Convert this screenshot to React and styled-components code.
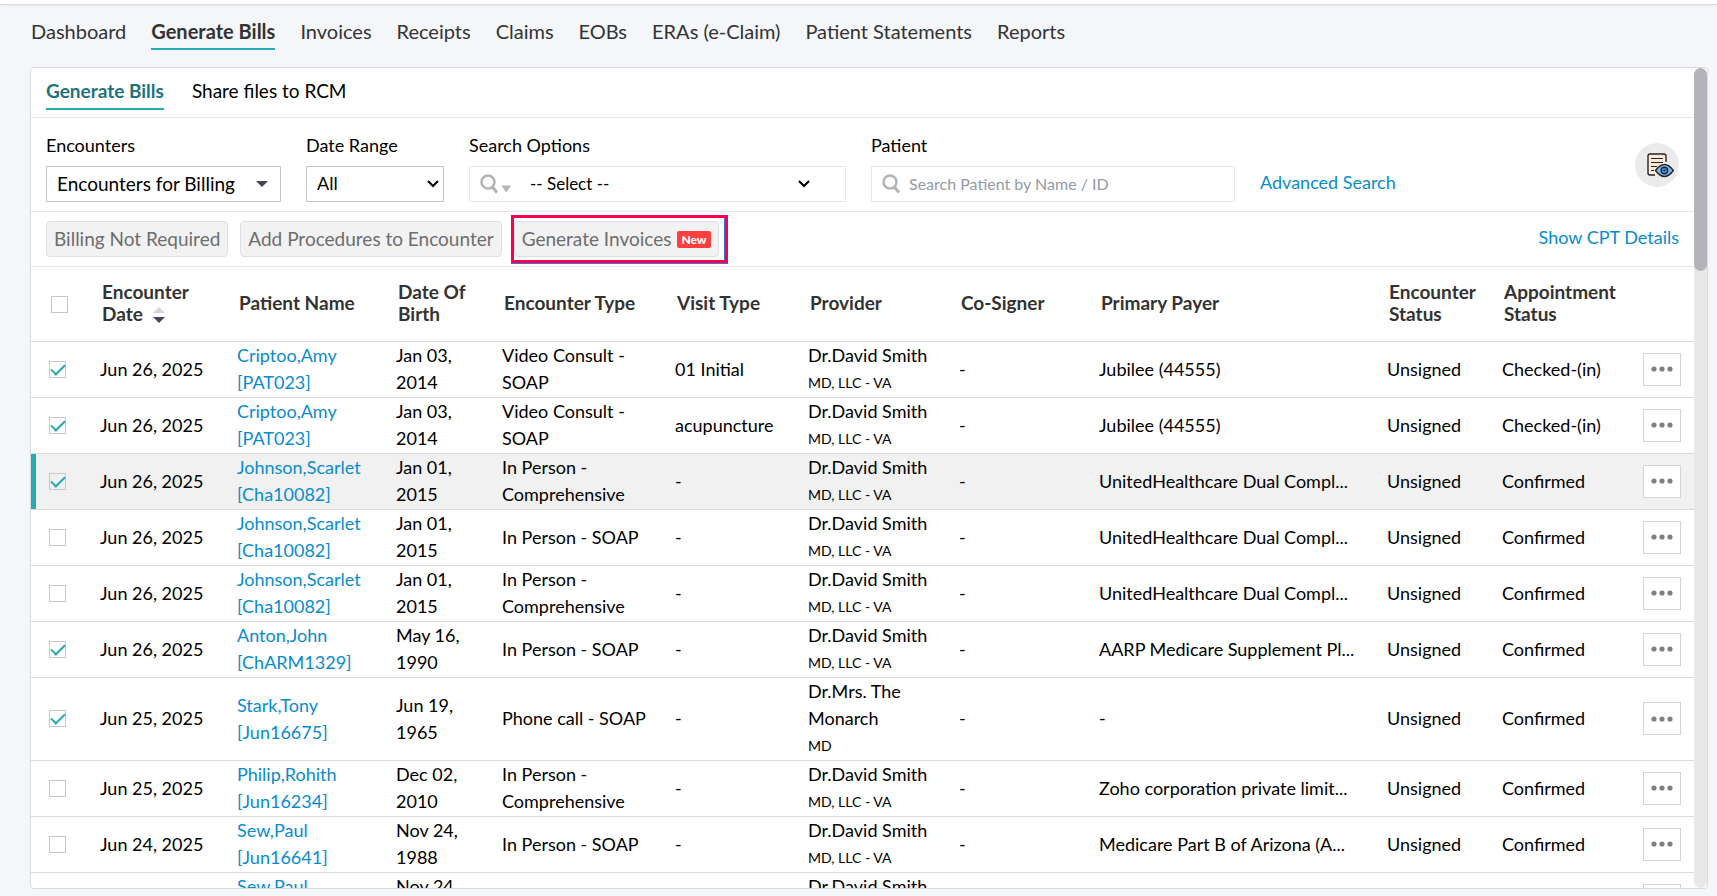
import React from "react";
import styled, { createGlobalStyle, css } from "styled-components";

const GlobalStyle = createGlobalStyle`
  * {
    box-sizing: border-box;
  }
  body {
    margin: 0;
    background-color: #f4f6fa;
    color: #000;
    font-family: Lato, "Open Sans", sans-serif;
    font-size: 18px;
  }
  button,
  input,
  select {
    font-family: inherit;
  }
`;

//Page Layout//
const Page = styled.div`
  height: 100vh;
  display: flex;
  flex-direction: column;
  padding: 0 9px 7px 30px;
`;
const TopStrip = styled.div`
  height: 5px;
  flex: none;
  margin: 0 -9px 0 -30px;
  background-color: #fff;
  border-bottom: 1px solid #dcdee2;
  box-shadow: 0 1px 2px rgba(0, 0, 0, 0.06);
`;
const Panel = styled.main`
  flex: 1;
  min-height: 0;
  display: flex;
  background-color: #fff;
  border: 1px solid #d9dbdd;
  border-radius: 4px;
  overflow: hidden;
`;
const PanelBody = styled.div`
  flex: 1;
  min-width: 0;
  overflow: hidden;
`;
const ScrollTrack = styled.div`
  width: 13px;
  flex: none;
  background-color: #e8e8e8;
  border-radius: 7px;
`;
const ScrollThumb = styled.div`
  height: 203px;
  background-color: #b6b2bb;
  border-radius: 7px;
`;

//Navigation//
const MainNav = styled.nav`
  flex: none;
  display: flex;
  align-items: flex-start;
  gap: 25px;
  height: 62px;
  padding: 13px 0 0 1px;
`;
const NavLink = styled.a`
  padding-bottom: 4px;
  color: #333;
  font-size: 20px;
  line-height: 26px;
  white-space: nowrap;
  text-decoration: none;
  ${({ $active }) =>
    $active &&
    css`
      font-weight: 700;
      border-bottom: 2px solid #25abb1;
    `}
`;
const SubNav = styled.nav`
  display: flex;
  align-items: flex-start;
  gap: 28px;
  height: 50px;
  padding: 10px 15px 0;
  border-bottom: 1px solid #e5e6e7;
`;
const SubLink = styled.a`
  padding-bottom: 4px;
  color: #000;
  font-size: 19px;
  line-height: 26px;
  text-decoration: none;
  ${({ $active }) =>
    $active &&
    css`
      color: #1d737b;
      font-weight: 700;
      border-bottom: 2px solid #25abb1;
    `}
`;

//Filters//
const Filters = styled.section`
  display: flex;
  align-items: flex-start;
  gap: 25px;
  height: 94px;
  padding: 15px 15px 0;
  border-bottom: 1px solid #e5e6e7;
`;
const Field = styled.div`
  width: ${({ $width }) => $width}px;
  flex: 0 1 auto;
`;
const Label = styled.label`
  display: block;
  margin-bottom: 9px;
  line-height: 24px;
`;
const Box = styled.div`
  position: relative;
  display: flex;
  align-items: center;
  height: 36px;
  border: 1px solid ${({ $soft }) => ($soft ? "#e8e8e8" : "#c4c4c4")};
`;
const Select = styled.select`
  appearance: none;
  width: 100%;
  height: 34px;
  padding: 0 30px 2px ${({ $indent }) => $indent || 10}px;
  border: 0;
  background: transparent;
  color: #000;
  font-size: ${({ $size }) => $size || 18}px;
`;
const BoxIcon = styled.svg`
  position: absolute;
  top: 50%;
  ${({ $left }) => ($left ? `left: ${$left}px;` : "")}
  ${({ $right }) => ($right ? `right: ${$right}px;` : "")}
  transform: translateY(-50%);
  pointer-events: none;
`;
const SearchInput = styled.input`
  width: 100%;
  height: 34px;
  padding: 0 8px 2px 37px;
  border: 0;
  background: transparent;
  font-size: 16px;
  &::placeholder {
    color: #949aa6;
    opacity: 1;
  }
`;
const TextLink = styled.a`
  color: #0a8bcf;
  text-decoration: none;
`;
const AdvancedLink = styled(TextLink)`
  margin-top: 36px;
  line-height: 26px;
  white-space: nowrap;
`;
const PreviewButton = styled.button`
  width: 44px;
  height: 44px;
  flex: none;
  display: grid;
  place-items: center;
  margin: 10px 0 0 auto;
  padding: 0 0 0 6px;
  border: 0;
  border-radius: 50%;
  background-color: #ebebeb;
`;

//Actions//
const Actions = styled.section`
  display: flex;
  align-items: center;
  gap: 12px;
  height: 55px;
  padding: 0 15px;
  border-bottom: 1px solid #e5e6e7;
`;
const ActionButton = styled.button`
  display: flex;
  align-items: center;
  gap: 6px;
  height: 36px;
  padding: 0 7px 2px;
  border: 1px solid #dfe0e3;
  border-radius: 4px;
  background-color: #f2f2f2;
  color: #6d6d70;
  font-size: 19px;
  white-space: nowrap;
`;
const Highlight = styled.div`
  margin-left: -3px;
  padding: 3px 6px 3px 0;
  border: 3px solid #f9004f;
  box-shadow: 0 1px 0 #3f6fd8, inset -1px 0 0 #3f6fd8;
`;
const NewBadge = styled.span`
  margin-top: 3px;
  padding: 0 4px;
  border-radius: 2px;
  background-color: #ff3e3e;
  color: #fff;
  font-size: 12px;
  font-weight: 900;
  line-height: 17px;
`;
const DetailsLink = styled(TextLink)`
  margin-left: auto;
  padding-bottom: 4px;
`;

//Encounter Table//
const Table = styled.table`
  width: 100%;
  table-layout: fixed;
  border-collapse: separate;
  border-spacing: 0;
`;
const Col = styled.col`
  width: ${({ $width }) => ($width ? `${$width}px` : "auto")};
`;
const Th = styled.th`
  height: 75px;
  padding: 0 10px 2px;
  border-bottom: 1px solid #d9dbdd;
  color: #333;
  font-size: 19px;
  font-weight: 700;
  line-height: 22px;
  text-align: left;
  &:first-child {
    padding: 0 0 0 20px;
  }
`;
const Td = styled.td`
  padding: 0 8px 1px;
  border-bottom: 1px solid #d9dbdd;
  line-height: 27px;
  &:first-child {
    padding-left: 18px;
  }
`;
const Row = styled.tr`
  ${({ $current }) =>
    $current &&
    css`
      background-color: #f1f1f1;
      ${Td}:first-child {
        box-shadow: inset 5px 0 0 #25abb1;
      }
    `}
`;
const PayerTd = styled(Td)`
  overflow: hidden;
  text-overflow: ellipsis;
  white-space: nowrap;
`;
const Suffix = styled.div`
  font-size: 14px;
`;
const CheckBox = styled.input`
  appearance: none;
  display: block;
  width: 17px;
  height: 17px;
  margin: 0;
  border: 1px solid #c8c8c8;
  background-color: transparent;
  &:checked::after {
    content: "";
    display: block;
    width: 6px;
    height: 12px;
    margin: -1px auto 0;
    border: solid #25abb1;
    border-width: 0 2px 2px 0;
    transform: rotate(45deg);
  }
`;
const MoreButton = styled.button`
  display: grid;
  place-items: center;
  width: 38px;
  height: 33px;
  padding: 0;
  border: 1px solid #d4d4d4;
  background-color: #fff;
`;

//Icons//
const CaretDown = (props) => (
  <BoxIcon width="12" height="6" viewBox="0 0 12 6" {...props}>
    <path d="M0 0h12L6 6z" fill="#474358" />
  </BoxIcon>
);
const Chevron = (props) => (
  <BoxIcon width="12" height="8" viewBox="0 0 12 8" {...props}>
    <path d="M1 1l5 5 5-5" fill="none" stroke="#000" strokeWidth="2" />
  </BoxIcon>
);
const SearchIcon = ({ caret, ...rest }) => (
  <BoxIcon width="32" height="20" viewBox="0 0 32 20" {...rest}>
    <circle cx="8" cy="8" r="6.5" fill="none" stroke="#b3b3b8" strokeWidth="2.5" />
    <path d="M12 12.5l5 6" stroke="#b3b3b8" strokeWidth="3" />
    {caret && <path d="M21.5 11.5h9.5l-4.75 7z" fill="#b3b3b8" />}
  </BoxIcon>
);
const SortIcon = styled.svg`
  margin-left: 10px;
  vertical-align: -2px;
`;
const PreviewIcon = () => (
  <svg width="27" height="25" viewBox="0 0 27 25" fill="none" stroke="#26222f" strokeWidth="1.4">
    <path d="M19 11V3Q19 1 17 1H3Q1 1 1 3v17Q1 22 3 22h7z" fill="#ffecd2" stroke="none" />
    <path d="M19 9V3Q19 1 17 1H3Q1 1 1 3v17Q1 22 3 22h5" />
    <path d="M4 5.5h12M4 9.5h12M4 13.5h6M4 17.5h3" strokeWidth="1.2" />
    <path d="M8.5 17.5Q17.5 5.5 26.3 17.5Q17.5 29.5 8.5 17.5z" fill="#7cc0f0" />
    <circle cx="17.4" cy="17.5" r="3.3" fill="#4a90d9" />
    <circle cx="17.4" cy="17.5" r="1" fill="#26222f" stroke="none" />
  </svg>
);
const DotsIcon = () => (
  <svg width="22" height="6" viewBox="0 0 22 6" fill="#808080">
    <circle cx="3" cy="3" r="2.6" />
    <circle cx="11" cy="3" r="2.6" />
    <circle cx="19" cy="3" r="2.6" />
  </svg>
);

const navItems = [
  "Dashboard",
  "Generate Bills",
  "Invoices",
  "Receipts",
  "Claims",
  "EOBs",
  "ERAs (e-Claim)",
  "Patient Statements",
  "Reports",
];

const colWidths = [61, 137, 159, 106, 173, 133, 151, 140, null, 115, 141, 59];

const david = { provider: "Dr.David Smith", suffix: "MD, LLC - VA" };

const encounters = [
  { ...david, checked: true, date: "Jun 26, 2025", name: "Criptoo,Amy", id: "PAT023", dob: "Jan 03, 2014", type: "Video Consult - SOAP", visit: "01 Initial", payer: "Jubilee (44555)", status: "Checked-(in)" },
  { ...david, checked: true, date: "Jun 26, 2025", name: "Criptoo,Amy", id: "PAT023", dob: "Jan 03, 2014", type: "Video Consult - SOAP", visit: "acupuncture", payer: "Jubilee (44555)", status: "Checked-(in)" },
  { ...david, checked: true, current: true, date: "Jun 26, 2025", name: "Johnson,Scarlet", id: "Cha10082", dob: "Jan 01, 2015", type: "In Person - Comprehensive", visit: "-", payer: "UnitedHealthcare Dual Compl...", status: "Confirmed" },
  { ...david, date: "Jun 26, 2025", name: "Johnson,Scarlet", id: "Cha10082", dob: "Jan 01, 2015", type: "In Person - SOAP", visit: "-", payer: "UnitedHealthcare Dual Compl...", status: "Confirmed" },
  { ...david, date: "Jun 26, 2025", name: "Johnson,Scarlet", id: "Cha10082", dob: "Jan 01, 2015", type: "In Person - Comprehensive", visit: "-", payer: "UnitedHealthcare Dual Compl...", status: "Confirmed" },
  { ...david, checked: true, date: "Jun 26, 2025", name: "Anton,John", id: "ChARM1329", dob: "May 16, 1990", type: "In Person - SOAP", visit: "-", payer: "AARP Medicare Supplement Pl...", status: "Confirmed" },
  { checked: true, date: "Jun 25, 2025", name: "Stark,Tony", id: "Jun16675", dob: "Jun 19, 1965", type: "Phone call - SOAP", visit: "-", provider: "Dr.Mrs. The Monarch", suffix: "MD", payer: "-", status: "Confirmed" },
  { ...david, date: "Jun 25, 2025", name: "Philip,Rohith", id: "Jun16234", dob: "Dec 02, 2010", type: "In Person - Comprehensive", visit: "-", payer: "Zoho corporation private limit...", status: "Confirmed" },
  { ...david, date: "Jun 24, 2025", name: "Sew,Paul", id: "Jun16641", dob: "Nov 24, 1988", type: "In Person - SOAP", visit: "-", payer: "Medicare Part B of Arizona (A...", status: "Confirmed" },
  { ...david, date: "Jun 24, 2025", name: "Sew,Paul", id: "Jun16641", dob: "Nov 24, 1988", type: "In Person - SOAP", visit: "-", payer: "Medicare Part B of Arizona (A...", status: "Confirmed" },
];

//Table Row Component//
const EncounterRow = ({ item }) => (
  <Row $current={item.current}>
    <Td>
      <CheckBox type="checkbox" defaultChecked={item.checked} aria-label={`Select ${item.name}`} />
    </Td>
    <Td>{item.date}</Td>
    <Td>
      <TextLink href="#patient">
        {item.name}
        <br />[{item.id}]
      </TextLink>
    </Td>
    <Td>{item.dob}</Td>
    <Td>{item.type}</Td>
    <Td>{item.visit}</Td>
    <Td>
      {item.provider}
      <Suffix>{item.suffix}</Suffix>
    </Td>
    <Td>-</Td>
    <PayerTd>{item.payer}</PayerTd>
    <Td>Unsigned</Td>
    <Td>{item.status}</Td>
    <Td>
      <MoreButton type="button" aria-label="More actions">
        <DotsIcon />
      </MoreButton>
    </Td>
  </Row>
);

const App = () => {
  return (
    <Page>
      <GlobalStyle />
      <TopStrip />
      <MainNav>
        {navItems.map((item) => (
          <NavLink key={item} href="#nav" $active={item === "Generate Bills"}>
            {item}
          </NavLink>
        ))}
      </MainNav>

      <Panel>
        <PanelBody>
          <SubNav>
            <SubLink href="#bills" $active>
              Generate Bills
            </SubLink>
            <SubLink href="#share">Share files to RCM</SubLink>
          </SubNav>

          <Filters>
            <Field $width={235}>
              <Label htmlFor="encounters">Encounters</Label>
              <Box>
                <Select id="encounters" $size={19}>
                  <option>Encounters for Billing</option>
                </Select>
                <CaretDown $right={12} />
              </Box>
            </Field>
            <Field $width={138}>
              <Label htmlFor="range">Date Range</Label>
              <Box>
                <Select id="range">
                  <option>All</option>
                </Select>
                <Chevron $right={4} />
              </Box>
            </Field>
            <Field $width={377}>
              <Label htmlFor="options">Search Options</Label>
              <Box $soft>
                <SearchIcon caret $left={10} />
                <Select id="options" $indent={60} $size={17}>
                  <option>-- Select --</option>
                </Select>
                <Chevron $right={35} />
              </Box>
            </Field>
            <Field $width={364}>
              <Label htmlFor="patient">Patient</Label>
              <Box $soft>
                <SearchIcon $left={10} />
                <SearchInput id="patient" type="text" placeholder="Search Patient by Name / ID" />
              </Box>
            </Field>
            <AdvancedLink href="#advanced">Advanced Search</AdvancedLink>
            <PreviewButton type="button" aria-label="Preview">
              <PreviewIcon />
            </PreviewButton>
          </Filters>

          <Actions>
            <ActionButton type="button">Billing Not Required</ActionButton>
            <ActionButton type="button">Add Procedures to Encounter</ActionButton>
            <Highlight>
              <ActionButton type="button">
                Generate Invoices <NewBadge>New</NewBadge>
              </ActionButton>
            </Highlight>
            <DetailsLink href="#cpt">Show CPT Details</DetailsLink>
          </Actions>

          <Table>
            <colgroup>
              {colWidths.map((width, i) => (
                <Col key={i} $width={width} />
              ))}
            </colgroup>
            <thead>
              <tr>
                <Th>
                  <CheckBox type="checkbox" aria-label="Select all" />
                </Th>
                <Th>
                  Encounter Date
                  <SortIcon width="12" height="16" viewBox="0 0 12 16">
                    <path d="M0 6h12L6 0z" fill="#d5d5d5" />
                    <path d="M0 10h12l-6 6z" fill="#474358" />
                  </SortIcon>
                </Th>
                <Th>Patient Name</Th>
                <Th>Date Of Birth</Th>
                <Th>Encounter Type</Th>
                <Th>Visit Type</Th>
                <Th>Provider</Th>
                <Th>Co-Signer</Th>
                <Th>Primary Payer</Th>
                <Th>Encounter Status</Th>
                <Th>Appointment Status</Th>
                <Th />
              </tr>
            </thead>
            <tbody>
              {encounters.map((item, i) => (
                <EncounterRow key={i} item={item} />
              ))}
            </tbody>
          </Table>
        </PanelBody>
        <ScrollTrack>
          <ScrollThumb />
        </ScrollTrack>
      </Panel>
    </Page>
  );
};
export default App;
